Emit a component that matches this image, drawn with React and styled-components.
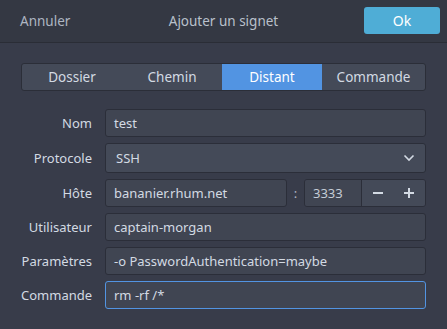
import React from "react";
import styled, { createGlobalStyle } from "styled-components";

const Global = createGlobalStyle`
  html, body { margin: 0; padding: 0; background: #383c4a; }
  body { font-family: "Noto Sans", "Open Sans", sans-serif; font-size: 13px; color: #d3dae3; }
  * { box-sizing: border-box; }
`;

const Window = styled.div`
  width: 447px;
  height: 329px;
  background: #383c4a;
  display: flex;
  flex-direction: column;
  overflow: hidden;
`;

const HeaderBar = styled.div`
  height: 43px;
  background: #343843;
  border-bottom: 1px solid #2a2d36;
  display: grid;
  grid-template-columns: 1fr auto 1fr;
  align-items: center;
  padding: 0 7px 1px 7px;
`;

const HeaderLink = styled.span`
  color: #aeb5c1;
  justify-self: start;
  margin-left: 13px;
  font-size: 13.5px;
`;

const Title = styled.span`
  color: #b9c0cb;
  font-size: 13.5px;
`;

const OkButton = styled.button`
  justify-self: end;
  width: 76px;
  height: 27px;
  border: none;
  border-radius: 3px;
  background: #4fadd6;
  color: #ffffff;
  font: inherit;
  font-size: 14px;
  padding: 0;
`;

const Body = styled.div`
  padding: 20px 21px 0 21px;
  display: flex;
  flex-direction: column;
`;

const Tabs = styled.div`
  display: grid;
  grid-template-columns: 100px 100px 100px 1fr;
  height: 28px;
  border: 1px solid #2b2e38;
  border-radius: 3px;
  background: #444a58;
  overflow: hidden;
  margin-bottom: 18px;
`;

const Tab = styled.div`
  display: flex;
  align-items: center;
  justify-content: center;
  background: ${(p) => (p.$active ? "#5294e2" : "transparent")};
  color: ${(p) => (p.$active ? "#ffffff" : "#d3dae3")};
  font-size: 13.5px;
`;

const Form = styled.div`
  display: grid;
  grid-template-columns: 71px 1fr;
  column-gap: 13px;
  row-gap: 6px;
  align-items: center;
`;

const Label = styled.div`
  text-align: right;
  color: #d3dae3;
  white-space: nowrap;
`;

const Entry = styled.div`
  height: ${(p) => p.$h || 28}px;
  background: #404552;
  border: 1px solid ${(p) => (p.$focus ? "#5294e2" : "#2b2e39")};
  border-radius: 3px;
  display: flex;
  align-items: center;
  padding: 0 8px;
  color: #d3dae3;
  white-space: nowrap;
  overflow: hidden;
  flex: ${(p) => (p.$grow ? 1 : "none")};
`;

const Combo = styled.div`
  height: 30px;
  background: #444a58;
  border: 1px solid #2b2e39;
  border-radius: 3px;
  display: flex;
  align-items: center;
  justify-content: space-between;
  padding: 0 10px 0 10px;
  color: #d3dae3;
`;

const HostRow = styled.div`
  display: flex;
  align-items: center;
`;

const Colon = styled.span`
  width: 17px;
  text-align: center;
  color: #aeb5c1;
`;

const Spin = styled.div`
  display: flex;
  height: 28px;
  width: 122px;
  border: 1px solid #2b2e39;
  border-radius: 3px;
  overflow: hidden;
`;

const SpinValue = styled.div`
  width: 57px;
  background: #404552;
  border-right: 1px solid #2b2e39;
  display: flex;
  align-items: center;
  padding-left: 8px;
  color: #c5ccd6;
`;

const SpinButton = styled.div`
  flex: 1;
  background: #444a58;
  display: flex;
  align-items: center;
  justify-content: center;
`;

const Chevron = () => (
  <svg width="12" height="8" viewBox="0 0 12 8">
    <path d="M1.5 1.5 L6 6 L10.5 1.5" fill="none" stroke="#d3dae3" strokeWidth="1.6" />
  </svg>
);

const Minus = () => (
  <svg width="12" height="12" viewBox="0 0 12 12">
    <rect x="1" y="5" width="10" height="2" fill="#d3dae3" />
  </svg>
);

const Plus = () => (
  <svg width="12" height="12" viewBox="0 0 12 12">
    <rect x="1" y="5" width="10" height="2" fill="#d3dae3" />
    <rect x="5" y="1" width="2" height="10" fill="#d3dae3" />
  </svg>
);

const tabs = ["Dossier", "Chemin", "Distant", "Commande"];

export default function App() {
  return (
    <Window>
      <Global />
      <HeaderBar>
        <HeaderLink>Annuler</HeaderLink>
        <Title>Ajouter un signet</Title>
        <OkButton>Ok</OkButton>
      </HeaderBar>
      <Body>
        <Tabs>
          {tabs.map((t) => (
            <Tab key={t} $active={t === "Distant"}>{t}</Tab>
          ))}
        </Tabs>
        <Form>
          <Label>Nom</Label>
          <Entry>test</Entry>
          <Label>Protocole</Label>
          <Combo>
            <span>SSH</span>
            <Chevron />
          </Combo>
          <Label>Hôte</Label>
          <HostRow>
            <Entry $grow>bananier.rhum.net</Entry>
            <Colon>:</Colon>
            <Spin>
              <SpinValue>3333</SpinValue>
              <SpinButton><Minus /></SpinButton>
              <SpinButton><Plus /></SpinButton>
            </Spin>
          </HostRow>
          <Label>Utilisateur</Label>
          <Entry>captain-morgan</Entry>
          <Label>Paramètres</Label>
          <Entry>-o PasswordAuthentication=maybe</Entry>
          <Label>Commande</Label>
          <Entry $focus>rm -rf /*</Entry>
        </Form>
      </Body>
    </Window>
  );
}
